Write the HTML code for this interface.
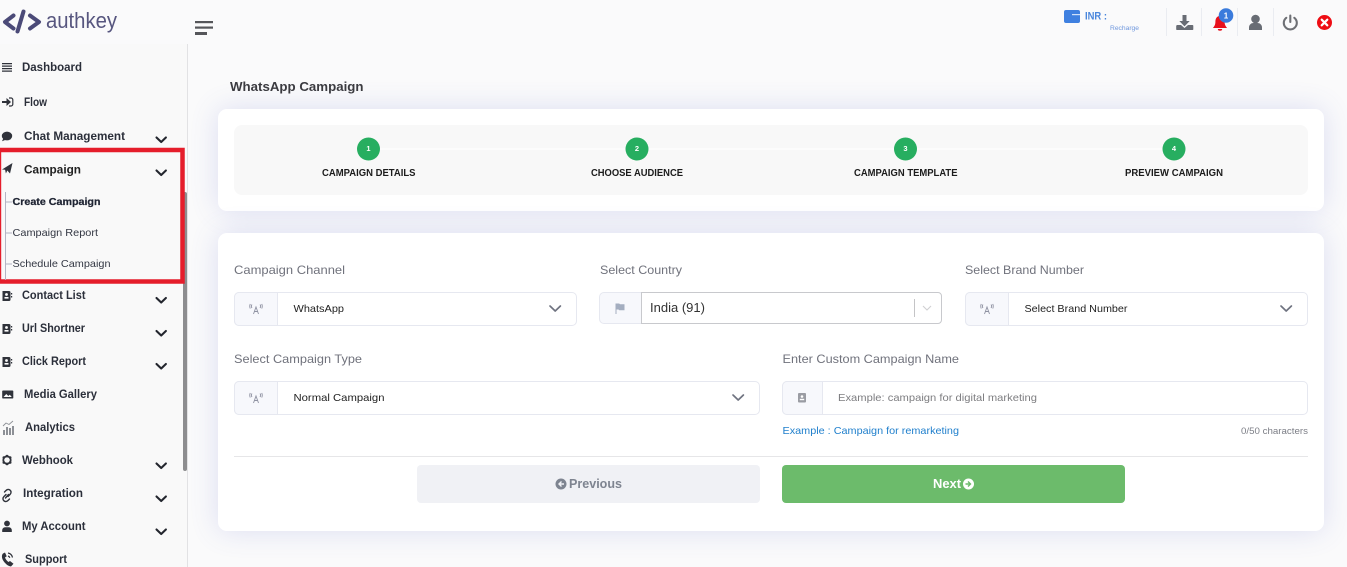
<!DOCTYPE html>
<html><head><meta charset="utf-8"><title>WhatsApp Campaign</title>
<style>
html,body{margin:0;padding:0;width:1347px;height:567px;overflow:hidden;background:#fafafb}
.a{position:absolute;box-sizing:border-box}
.card{background:#fff;border-radius:9px;box-shadow:0 0 28px rgba(90,100,200,.19)}
.f{background:#fff;border:1px solid #e6e8f0;border-radius:5px}
.p{background:#f7f8fc;border:1px solid #e6e8f0;border-radius:5px 0 0 5px}
svg{position:absolute;left:0;top:0}
text{font-family:"Liberation Sans",sans-serif}
.m{font-weight:700;font-size:12px;fill:#2b2f3a}
.l{font-size:12px;fill:#70727c}
.s{font-weight:700;font-size:10.5px;fill:#1c1c1c}
.v{font-size:10.5px;fill:#222}
.c{fill:none;stroke:#23262e;stroke-width:2.1;stroke-linecap:round;stroke-linejoin:round}
.g{fill:none;stroke:#6f7380;stroke-width:1.7;stroke-linecap:round;stroke-linejoin:round}
</style></head><body>
<div class="a card" style="left:218px;top:109px;width:1106px;height:102px"></div>
<div class="a" style="left:234px;top:125px;width:1074px;height:70px;background:#f8f8f8;border-radius:8px"></div>
<div class="a card" style="left:218px;top:233px;width:1106px;height:298px"></div>
<div class="a" style="left:0;top:44px;width:188px;height:523px;background:#f9f9f9;border-right:1px solid #e2e2e4"></div>
<div class="a" style="left:183px;top:192px;width:4px;height:279px;background:#8d8d8f;border-radius:2px"></div>

<div class="a f" style="left:234px;top:292px;width:343px;height:34px"></div>
<div class="a p" style="left:234px;top:292px;width:44px;height:34px"></div>
<div class="a p" style="left:599px;top:292px;width:43px;height:32px"></div>
<div class="a" style="left:641px;top:292px;width:301px;height:32px;background:#fff;border:1px solid #c8c9cd;border-radius:0 4px 4px 0"></div>
<div class="a f" style="left:965px;top:292px;width:343px;height:34px"></div>
<div class="a p" style="left:965px;top:292px;width:44px;height:34px"></div>
<div class="a f" style="left:234px;top:381px;width:526px;height:34px"></div>
<div class="a p" style="left:234px;top:381px;width:44px;height:34px"></div>
<div class="a f" style="left:782px;top:381px;width:526px;height:34px"></div>
<div class="a p" style="left:782px;top:381px;width:41px;height:34px"></div>
<div class="a" style="left:234px;top:456px;width:1074px;height:1px;background:#e6e6e8"></div>
<div class="a" style="left:417px;top:465px;width:343px;height:38px;background:#f0f1f5;border-radius:4px"></div>
<div class="a" style="left:782px;top:465px;width:343px;height:38px;background:#6cbb6b;border-radius:4px"></div>

<svg width="1347" height="567" viewBox="0 0 1347 567">
<!-- logo -->
<g fill="none" stroke="#4b4a78" stroke-width="4" stroke-linecap="round" stroke-linejoin="round">
<path d="M13.500 15.500L5 22l8.500 6.500"/><path d="M23.500 11.500L17.500 31.500"/><path d="M30 15.500l9 6.500-9 6.500"/></g>
<text x="46" y="28" font-size="22" fill="#57567f" textLength="71" lengthAdjust="spacingAndGlyphs">authkey</text>
<!-- hamburger -->
<rect x="195" y="21" width="18" height="2.200" fill="#55565a"/><rect x="195" y="26.500" width="18" height="2.200" fill="#55565a"/><rect x="195" y="32" width="12" height="3" fill="#55565a"/>
<!-- top right -->
<path d="M1066 10h12a2 2 0 0 1 2 2v9a2 2 0 0 1-2 2h-12a2 2 0 0 1-2-2v-9a2 2 0 0 1 2-2z" fill="#3f80e0"/><rect x="1072" y="14" width="8" height="1.200" fill="#cfe0fa"/>
<text x="1085" y="19.500" font-size="11" font-weight="700" fill="#4a86dc" textLength="22" lengthAdjust="spacingAndGlyphs">INR :</text>
<text x="1110" y="30" font-size="6.500" fill="#6f97dd" textLength="29" lengthAdjust="spacingAndGlyphs">Recharge</text>
<g fill="#eaecf1"><rect x="1166" y="8" width="1" height="28"/><rect x="1201" y="8" width="1" height="28"/><rect x="1237" y="8" width="1" height="28"/><rect x="1273" y="8" width="1" height="28"/></g>
<path d="M1182.500 15h4v6h3.200l-5.200 5.400-5.200-5.400h3.200z" fill="#686c74"/><path d="M1177 25h4l3.500 3 3.500-3h4.500a.8.800 0 0 1 .8.800v3.400a.8.800 0 0 1-.8.800h-15.500a.8.800 0 0 1-.8-.800v-3.400z" fill="#686c74"/>
<path d="M1220 16c-3.500 0-4.600 3-4.600 6 0 3-1.400 4.500-2.400 6h14c-1-1.500-2.400-3-2.400-6 0-3-1.100-6-4.600-6z" fill="#e8101c"/><path d="M1217.800 29h4.400a2.200 1.800 0 0 1-4.400 0z" fill="#e8101c"/>
<circle cx="1226" cy="15.500" r="7.300" fill="#3a7bdc"/>
<text x="1226" y="18.500" font-size="8" font-weight="700" fill="#fff" text-anchor="middle">1</text>
<circle cx="1255.500" cy="19" r="4.300" fill="#686c74"/><path d="M1249 30v-2.500c0-2.800 2.200-4.500 4.500-4.500h4c2.300 0 4.500 1.700 4.500 4.500v2.500z" fill="#686c74"/>
<path d="M1286.300 17.800a6.500 6.500 0 1 0 8 0" fill="none" stroke="#6e7075" stroke-width="2.100" stroke-linecap="round"/><path d="M1290.300 15.500v6.500" stroke="#6e7075" stroke-width="2.100" stroke-linecap="round"/>
<circle cx="1324.500" cy="22.500" r="7.500" fill="#ee0d14"/><path d="M1321.700 19.700l5.600 5.600M1327.300 19.700l-5.600 5.600" stroke="#fff" stroke-width="2.200" stroke-linecap="round"/>

<!-- sidebar icons -->
<g fill="#30333b">
<path d="M2 63h10v1.200H2zM2 65.500h10v1.200H2zM2 68h10v1.200H2zM2 70.500h10v1.200H2z"/>
<path d="M2 101h4.500v-3l4.500 4-4.500 4v-3H2z"/><path d="M9 98h2a1.800 1.800 0 0 1 1.800 1.800v4.400a1.800 1.800 0 0 1-1.800 1.800H9" fill="none" stroke="#30333b" stroke-width="1.200"/>
<ellipse cx="7" cy="136" rx="5.200" ry="4.400"/><path d="M3.500 138l-1.500 3.200 3.800-1.500z"/>
<path d="M2 169.500l10.500-6.500-2.500 10.500-2.700-3-1.400 3-.8-3.800z"/>
<path d="M2.500 291h6.500a1.500 1.500 0 0 1 1.500 1.500v7a1.500 1.500 0 0 1-1.500 1.500H2.500zM11 293h1.200v1.500H11zM11 296h1.200v1.500H11z"/>
<path d="M2.500 324h6.500a1.500 1.500 0 0 1 1.500 1.500v7a1.500 1.500 0 0 1-1.500 1.500H2.500zM11 326h1.200v1.500H11zM11 329h1.200v1.500H11z"/>
<path d="M2.500 357h6.500a1.500 1.500 0 0 1 1.500 1.500v7a1.500 1.500 0 0 1-1.500 1.500H2.500zM11 359h1.200v1.500H11zM11 362h1.200v1.500H11z"/>
<path d="M3 390.500h9.500a.8.800 0 0 1 .8.800v6.400a.8.800 0 0 1-.8.800H3a.8.800 0 0 1-.8-.800v-6.400a.8.800 0 0 1 .8-.800z"/>
<circle cx="7" cy="460" r="3.700" fill="none" stroke="#30333b" stroke-width="1.800"/><circle cx="3.800" cy="457.500" r="1.300"/><circle cx="10.200" cy="457.500" r="1.300"/><circle cx="3.800" cy="462.500" r="1.300"/><circle cx="10.200" cy="462.500" r="1.300"/><circle cx="7" cy="456" r="1.300"/><circle cx="7" cy="464" r="1.300"/>
<circle cx="7" cy="523.500" r="2.900"/><path d="M2.200 532v-1.800c0-2 1.800-3 3-3h3.600c1.200 0 3 1 3 3v1.800z"/>
<path d="M3 553.500c-1.500 1.500-1.500 4.500.5 7.500 2 3 4.500 5 7.500 5.500l2.500-2.800-3.500-2.700-1.500 1c-1.500-1-3-3-3.500-4.500l1.700-1.200-1.700-3.800z"/>
</g>
<g fill="#fff"><circle cx="6.500" cy="294.500" r="1.400"/><rect x="4.500" y="297" width="4" height="1.600"/><circle cx="6.500" cy="327.500" r="1.400"/><rect x="4.500" y="330" width="4" height="1.600"/><circle cx="6.500" cy="360.500" r="1.400"/><rect x="4.500" y="363" width="4" height="1.600"/><path d="M3.500 397l2.800-3 2 2 1.500-1.300 2 2.300z"/></g>
<path d="M6 494.500l-2 2c-1.500 1.500-1.200 3.300-.2 4.200s2.700 1.300 4.200-.2l1.500-1.500M8 496.500l2-2c1.500-1.500 1.200-3.300.2-4.200s-2.700-1.300-4.200.2l-1.500 1.500M5.500 498l3-3.500" fill="none" stroke="#30333b" stroke-width="1.400" stroke-linecap="round"/>
<g fill="#8d9096"><rect x="3" y="430" width="2" height="5"/><rect x="6" y="427" width="2" height="8"/><rect x="9" y="428" width="2" height="7"/><rect x="12" y="426" width="2" height="9"/></g><path d="M3 426l3-3 3 1.500 4-3.500" fill="none" stroke="#8d9096" stroke-width=".9"/>
<path d="M8 553c2.500.500 4 2 4.500 4.500M8 556c1 .300 1.500 .800 1.800 1.800" fill="none" stroke="#30333b" stroke-width="1.200"/>

<!-- red highlight -->
<path d="M0 150H182.500V281.500H0" fill="none" stroke="#e51d2b" stroke-width="4.500"/>
<rect x="0" y="148" width="1.200" height="135" fill="#e51d2b"/>
<path d="M5.500 192V280M5.500 202H12M5.500 233H12M5.500 264H12" stroke="#b4b4c4" stroke-width="1" fill="none"/>

<!-- sidebar text -->
<text class="m" x="22" y="71" textLength="60" lengthAdjust="spacingAndGlyphs">Dashboard</text>
<text class="m" x="24" y="106" textLength="23" lengthAdjust="spacingAndGlyphs">Flow</text>
<text class="m" x="24" y="140" textLength="101" lengthAdjust="spacingAndGlyphs">Chat Management</text>
<text class="m" x="24" y="173.500" textLength="57" lengthAdjust="spacingAndGlyphs" style="fill:#222">Campaign</text>
<text x="12.500" y="205" font-size="10.500" font-weight="700" fill="#1f2433" textLength="88" lengthAdjust="spacingAndGlyphs" stroke="#1f2433" stroke-width=".25">Create Campaign</text>
<text x="12.500" y="236" font-size="10.500" fill="#333743" textLength="85.500" lengthAdjust="spacingAndGlyphs">Campaign Report</text>
<text x="12.500" y="267" font-size="10.500" fill="#333743" textLength="98" lengthAdjust="spacingAndGlyphs">Schedule Campaign</text>
<text class="m" x="22" y="299" textLength="63.500" lengthAdjust="spacingAndGlyphs">Contact List</text>
<text class="m" x="22" y="332" textLength="63" lengthAdjust="spacingAndGlyphs">Url Shortner</text>
<text class="m" x="22" y="365" textLength="64" lengthAdjust="spacingAndGlyphs">Click Report</text>
<text class="m" x="24" y="398" textLength="73" lengthAdjust="spacingAndGlyphs">Media Gallery</text>
<text class="m" x="25" y="431" textLength="50" lengthAdjust="spacingAndGlyphs">Analytics</text>
<text class="m" x="22" y="464" textLength="51" lengthAdjust="spacingAndGlyphs">Webhook</text>
<text class="m" x="23" y="497" textLength="60" lengthAdjust="spacingAndGlyphs">Integration</text>
<text class="m" x="22" y="530" textLength="63.500" lengthAdjust="spacingAndGlyphs">My Account</text>
<text class="m" x="25" y="563" textLength="42" lengthAdjust="spacingAndGlyphs">Support</text>
<g class="c"><path d="M156.500 137.500l4.700 4.500 4.700-4.500"/><path d="M156.500 170.500l4.700 4.500 4.700-4.500"/><path d="M156.500 298l4.700 4.500 4.700-4.500"/><path d="M156.500 331l4.700 4.500 4.700-4.500"/><path d="M156.500 364l4.700 4.500 4.700-4.500"/><path d="M156.500 463.500l4.700 4.500 4.700-4.500"/><path d="M156.500 496.500l4.700 4.500 4.700-4.500"/><path d="M156.500 529.500l4.700 4.500 4.700-4.500"/></g>

<!-- heading + stepper -->
<text x="230" y="91" font-size="13" font-weight="700" fill="#3b3b40" textLength="133.500" lengthAdjust="spacingAndGlyphs">WhatsApp Campaign</text>
<rect x="368" y="148.500" width="806" height="1" fill="#fff"/>
<g fill="#27ae60"><circle cx="368.500" cy="149" r="11.500"/><circle cx="637" cy="149" r="11.500"/><circle cx="905.500" cy="149" r="11.500"/><circle cx="1174" cy="149" r="11.500"/></g>
<g font-size="7.500" font-weight="700" fill="#fff" text-anchor="middle"><text x="368.500" y="151">1</text><text x="637" y="151">2</text><text x="905.500" y="151">3</text><text x="1174" y="151">4</text></g>
<text class="s" x="322" y="176" textLength="93.500" lengthAdjust="spacingAndGlyphs">CAMPAIGN DETAILS</text>
<text class="s" x="591" y="176" textLength="92" lengthAdjust="spacingAndGlyphs">CHOOSE AUDIENCE</text>
<text class="s" x="854" y="176" textLength="103.500" lengthAdjust="spacingAndGlyphs">CAMPAIGN TEMPLATE</text>
<text class="s" x="1125" y="176" textLength="98" lengthAdjust="spacingAndGlyphs">PREVIEW CAMPAIGN</text>

<!-- labels -->
<text class="l" x="234" y="274" textLength="111" lengthAdjust="spacingAndGlyphs">Campaign Channel</text>
<text class="l" x="600" y="274" textLength="82" lengthAdjust="spacingAndGlyphs">Select Country</text>
<text class="l" x="965" y="274" textLength="119" lengthAdjust="spacingAndGlyphs">Select Brand Number</text>
<text class="l" x="234" y="363" textLength="128" lengthAdjust="spacingAndGlyphs">Select Campaign Type</text>
<text class="l" x="782.500" y="363" textLength="176.500" lengthAdjust="spacingAndGlyphs">Enter Custom Campaign Name</text>

<!-- values -->
<text class="v" x="293.500" y="312" textLength="50.500" lengthAdjust="spacingAndGlyphs">WhatsApp</text>
<text x="650" y="312" font-size="13" fill="#333" textLength="55" lengthAdjust="spacingAndGlyphs">India (91)</text>
<text class="v" x="1024.500" y="312" textLength="103" lengthAdjust="spacingAndGlyphs">Select Brand Number</text>
<text class="v" x="293.500" y="401" textLength="91" lengthAdjust="spacingAndGlyphs">Normal Campaign</text>
<text x="838" y="401" font-size="10.500" fill="#7d7d80" textLength="199" lengthAdjust="spacingAndGlyphs">Example: campaign for digital marketing</text>
<text x="782.500" y="434" font-size="10.500" fill="#1f7fcc" textLength="176.500" lengthAdjust="spacingAndGlyphs">Example : Campaign for remarketing</text>
<text x="1241" y="434" font-size="9" fill="#7c7e86" textLength="67" lengthAdjust="spacingAndGlyphs">0/50 characters</text>

<!-- field chevrons & icons -->
<g class="g"><path d="M550 306l5.200 5 5.200-5"/><path d="M1281 306l5.200 5 5.200-5"/><path d="M733 395l5.200 5 5.200-5"/></g>
<rect x="914" y="299" width="1" height="18" fill="#c4c4c6"/>
<path d="M923 306l4 4 4-4" fill="none" stroke="#cfcfd2" stroke-width="1.100"/>
<g fill="none" stroke="#8f92a2" stroke-width=".9">
<g id="ant"><path d="M253.500 314l2.500-7 2.500 7M254.500 311.500h3"/><path d="M252 304.500a3 3 0 0 0 0 3.500M260 304.500a3 3 0 0 1 0 3.500M250.300 304a5 5 0 0 0 0 4.500M261.700 304a5 5 0 0 1 0 4.500"/></g>
<use href="#ant" x="731"/><use href="#ant" y="89"/>
</g>
<path d="M615.500 303v11h1v-4.500h2l.8 .8h5.200v-6h-4.500l-.8-.8h-3.700z" fill="#a4aec0"/>
<rect x="798" y="393" width="8" height="9.500" rx="1" fill="#9a9ca3"/><circle cx="802" cy="396.500" r="1.300" fill="#fff"/><rect x="799.800" y="398.800" width="4.400" height="1.400" fill="#fff"/>

<!-- buttons -->
<circle cx="561" cy="484" r="5.500" fill="#7e8490"/><path d="M564 484h-4.500M561.500 481.500l-2.500 2.500 2.500 2.500" fill="none" stroke="#f0f1f5" stroke-width="1.400"/>
<text x="569" y="488" font-size="12.500" font-weight="700" fill="#7e8490" textLength="53" lengthAdjust="spacingAndGlyphs">Previous</text>
<text x="933" y="488" font-size="12.500" font-weight="700" fill="#fff" textLength="28" lengthAdjust="spacingAndGlyphs">Next</text>
<circle cx="968.500" cy="484" r="5.500" fill="#fff"/><path d="M965.500 484h4.500M968 481.500l2.500 2.500-2.500 2.500" fill="none" stroke="#6cbb6b" stroke-width="1.400"/>
</svg>
</body></html>
